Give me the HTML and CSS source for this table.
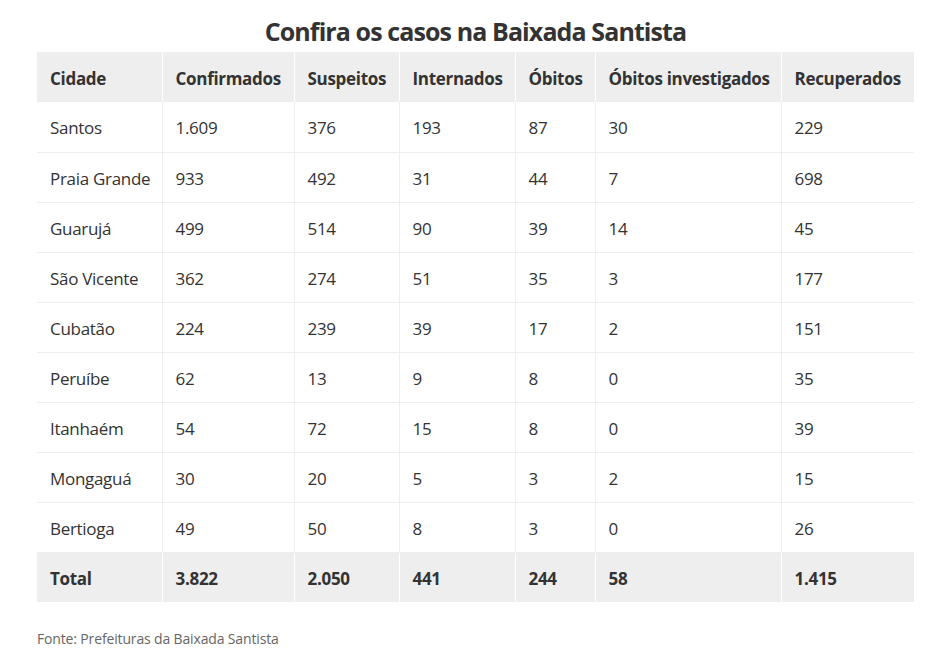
FILE: index.html
```html
<!DOCTYPE html>
<html lang="pt-BR">
<head>
<meta charset="utf-8">
<title>Confira os casos na Baixada Santista</title>
<link rel="stylesheet" href="styles.css">
</head>
<body>
<div class="wrap">
  <h2 class="title">Confira os casos na Baixada Santista</h2>
  <table class="data">
    <colgroup>
      <col class="c1"><col class="c2"><col class="c3"><col class="c4"><col class="c5"><col class="c6"><col class="c7">
    </colgroup>
    <thead>
      <tr><th>Cidade</th><th>Confirmados</th><th>Suspeitos</th><th>Internados</th><th>Óbitos</th><th>Óbitos investigados</th><th>Recuperados</th></tr>
    </thead>
    <tbody>
      <tr><td>Santos</td><td>1.609</td><td>376</td><td>193</td><td>87</td><td>30</td><td>229</td></tr>
      <tr><td>Praia Grande</td><td>933</td><td>492</td><td>31</td><td>44</td><td>7</td><td>698</td></tr>
      <tr><td>Guarujá</td><td>499</td><td>514</td><td>90</td><td>39</td><td>14</td><td>45</td></tr>
      <tr><td>São Vicente</td><td>362</td><td>274</td><td>51</td><td>35</td><td>3</td><td>177</td></tr>
      <tr><td>Cubatão</td><td>224</td><td>239</td><td>39</td><td>17</td><td>2</td><td>151</td></tr>
      <tr><td>Peruíbe</td><td>62</td><td>13</td><td>9</td><td>8</td><td>0</td><td>35</td></tr>
      <tr><td>Itanhaém</td><td>54</td><td>72</td><td>15</td><td>8</td><td>0</td><td>39</td></tr>
      <tr><td>Mongaguá</td><td>30</td><td>20</td><td>5</td><td>3</td><td>2</td><td>15</td></tr>
      <tr><td>Bertioga</td><td>49</td><td>50</td><td>8</td><td>3</td><td>0</td><td>26</td></tr>
    </tbody>
    <tfoot>
      <tr><td>Total</td><td>3.822</td><td>2.050</td><td>441</td><td>244</td><td>58</td><td>1.415</td></tr>
    </tfoot>
  </table>
  <p class="source">Fonte: Prefeituras da Baixada Santista</p>
</div>
</body>
</html>
```
FILE: styles.css
```css
html, body {
  margin: 0;
  padding: 0;
  background: #fff;
}
body {
  font-family: "Open Sans", "Noto Sans", sans-serif;
  color: #333;
}
.wrap {
  width: 877px;
  margin-left: 37px;
}
.title {
  margin: 15px 0 5px;
  font-size: 25px;
  line-height: 32px;
  font-weight: 700;
  letter-spacing: -0.9px;
  text-align: center;
  color: #333;
}
.data {
  width: 877px;
  border-collapse: collapse;
  table-layout: fixed;
  font-size: 17px;
  letter-spacing: -0.3px;
}
.c1 { width: 125px; }
.c2 { width: 132px; }
.c3 { width: 105px; }
.c4 { width: 116px; }
.c5 { width: 80px; }
.c6 { width: 186px; }
.c7 { width: 133px; }
.data th, .data td {
  height: 50px;
  padding: 2px 13px 0;
  text-align: left;
  vertical-align: middle;
  box-sizing: border-box;
  white-space: nowrap;
}
.data thead th, .data tfoot td {
  background: #eee;
  font-weight: 700;
  border-left: 1px solid #fff;
}
.data thead th:first-child, .data tfoot td:first-child {
  border-left: none;
}
.data tbody td {
  border-left: 1px solid #eee;
  border-bottom: 1px solid #eee;
  font-weight: 400;
}
.data tbody td:first-child {
  border-left: none;
}
.source {
  margin: 27px 0 0;
  font-size: 14px;
  line-height: 20px;
  letter-spacing: -0.15px;
  color: #666;
}
```
